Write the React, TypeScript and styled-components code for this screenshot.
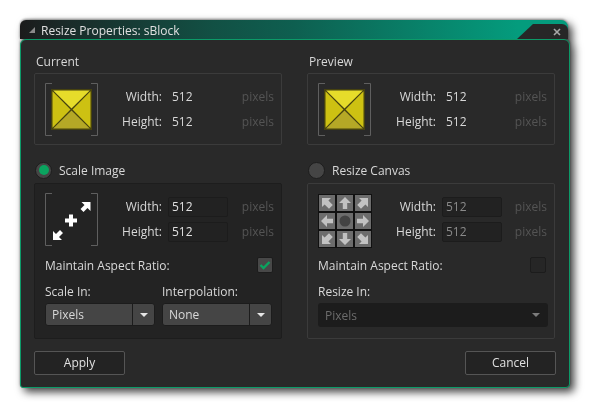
import React from "react";
import styled, { createGlobalStyle } from "styled-components";

const Global = createGlobalStyle`
  html, body { margin: 0; padding: 0; background: #fff; }
  body { font-family: "Open Sans", "Noto Sans", sans-serif; font-size: 12px; color: #d8d8d8; }
`;

const Page = styled.div`
  width: 590px;
  height: 409px;
  padding: 20px 0 0 20px;
  box-sizing: border-box;
  overflow: hidden;
`;

const Window = styled.div`
  position: relative;
  width: 550px;
  filter: drop-shadow(0 -1px 1px rgba(0, 0, 0, 0.4)) drop-shadow(4px 4px 4px rgba(0, 0, 0, 0.75));
`;

const TitleBar = styled.div`
  position: relative;
  width: 548px;
  height: 19px;
  display: flex;
  align-items: center;
  padding: 1px 0 0 9px;
  box-sizing: border-box;
  gap: 6px;
  font-size: 12px;
  color: #e0e0e0;
  border-radius: 6px 7px 0 0;
  background: linear-gradient(90deg, #1b1b1b 0%, #1a2a28 8%, #125044 35%, #0e5f50 50%, #049c7d 91%, #049c7d 100%);
`;

const TitleGrip = styled.span`
  width: 0;
  height: 0;
  border-left: 6px solid transparent;
  border-bottom: 6px solid #8a8a8a;
`;

const Notch = styled.div`
  position: absolute;
  top: 4px;
  right: 0;
  width: 51px;
  height: 15px;
  background: #272727;
  clip-path: polygon(16px 0, 100% 0, 100% 100%, 0 100%);
  border-top-right-radius: 6px;
  display: flex;
  align-items: center;
  justify-content: flex-end;
  padding: 0 7px 0 0;
  box-sizing: border-box;
`;

const Body = styled.div`
  height: 349px;
  width: 550px;
  box-sizing: border-box;
  background: #292929;
  border: 1px solid #0c9a68;
  border-radius: 6px 6px 4px 3px;
  padding: 13px 13px 12px 13px;
  display: flex;
  flex-direction: column;
`;

const Columns = styled.div`
  display: grid;
  grid-template-columns: 248px 248px;
  column-gap: 25px;
`;

const Column = styled.div`
  display: flex;
  flex-direction: column;
`;

const Caption = styled.div`
  height: 20px;
  line-height: 17px;
  padding-left: 2px;
  font-size: 12px;
`;

const InfoFrame = styled.div`
  height: 72px;
  box-sizing: border-box;
  border: 1px solid #3b3b3b;
  border-radius: 2px;
  padding: 9px 7px 0 10px;
  display: flex;
  align-items: flex-start;
`;

const RadioRow = styled.div`
  height: 24px;
  margin-top: 13px;
  margin-bottom: 1px;
  display: flex;
  align-items: center;
  gap: 7px;
  padding-left: 1px;
  font-size: 12px;
`;

const Radio = styled.span<{ $on?: boolean }>`
  width: 17px;
  height: 17px;
  box-sizing: border-box;
  border-radius: 50%;
  background: #454545;
  border: 1px solid #1d1d1d;
  display: flex;
  align-items: center;
  justify-content: center;
  &::after {
    content: "";
    width: 10px;
    height: 10px;
    border-radius: 50%;
    background: ${(p) => (p.$on ? "#0aa45f" : "transparent")};
  }
`;

const OptionPanel = styled.div<{ $dark?: boolean }>`
  height: 156px;
  box-sizing: border-box;
  border: 1px solid ${(p) => (p.$dark ? "#1d1d1d" : "#3b3b3b")};
  background: ${(p) => (p.$dark ? "#232323" : "#292929")};
  border-radius: 2px;
  padding: 9px 7px 0 10px;
  display: flex;
  flex-direction: column;
`;

const TopRow = styled.div`
  display: flex;
  height: 54px;
`;

const IconBox = styled.div`
  width: 54px;
  height: 54px;
  flex: none;
`;

const Fields = styled.div<{ $label: number }>`
  flex: 1;
  height: 54px;
  box-sizing: border-box;
  padding-bottom: 2px;
  display: grid;
  grid-template-columns: ${(p) => p.$label}px 1fr auto;
  grid-auto-rows: 25px;
  align-content: center;
  align-items: center;
  column-gap: 6px;
`;

const FieldLabel = styled.span`
  text-align: right;
  font-size: 12px;
`;

const Value = styled.span`
  font-size: 12px;
  padding-left: 4px;
`;

const Unit = styled.span`
  font-size: 12px;
  color: #545454;
  text-align: right;
`;

const NumberBox = styled.div<{ $off?: boolean }>`
  height: 20px;
  width: 60px;
  box-sizing: border-box;
  background: #222;
  border: 1px solid #1c1c1c;
  border-radius: 2px;
  padding-left: 3px;
  line-height: 17px;
  font-size: 12px;
  color: ${(p) => (p.$off ? "#8a8a8a" : "#e0e0e0")};
`;

const CheckRow = styled.div`
  display: flex;
  align-items: center;
  justify-content: space-between;
  height: 18px;
  margin-top: 9px;
  padding-right: 1px;
  font-size: 12px;
`;

const CheckBox = styled.span<{ $on?: boolean }>`
  width: 16px;
  height: 16px;
  box-sizing: border-box;
  border-radius: 2px;
  border: 1px solid #1c1c1c;
  background: ${(p) => (p.$on ? "#484848" : "#262626")};
  display: flex;
  align-items: center;
  justify-content: center;
`;

const SelectGrid = styled.div`
  display: grid;
  grid-template-columns: 110px 110px;
  column-gap: 7px;
  margin-top: 8px;
`;

const SelectLabel = styled.div`
  height: 21px;
  line-height: 19px;
  font-size: 12px;
`;

const Select = styled.div`
  height: 23px;
  box-sizing: border-box;
  display: flex;
  background: #454545;
  border: 1px solid #1c1c1c;
  border-radius: 3px;
  font-size: 12px;
`;

const SelectText = styled.span`
  flex: 1;
  padding-left: 6px;
  line-height: 22px;
`;

const SelectArrow = styled.span`
  width: 21px;
  border-left: 1px solid #1c1c1c;
  display: flex;
  align-items: center;
  justify-content: center;
`;

const Caret = styled.span<{ $c: string }>`
  width: 0;
  height: 0;
  border-left: 4px solid transparent;
  border-right: 4px solid transparent;
  border-top: 4px solid ${(p) => p.$c};
`;

const WideSelect = styled.div`
  height: 24px;
  width: 230px;
  box-sizing: border-box;
  display: flex;
  align-items: center;
  justify-content: space-between;
  background: #1c1c1c;
  border-radius: 3px;
  padding: 0 8px 0 7px;
  font-size: 12px;
  color: #6c6c6c;
`;

const Footer = styled.div`
  display: flex;
  justify-content: space-between;
  margin-top: 12px;
`;

const Button = styled.div`
  width: 91px;
  height: 24px;
  box-sizing: border-box;
  border: 1px solid #555;
  border-radius: 2px;
  background: #232323;
  text-align: center;
  line-height: 22px;
  font-size: 12px;
  color: #e0e0e0;
`;

const Bracket = ({ children }: { children: React.ReactNode }) => (
  <svg width="54" height="54" viewBox="0 0 54 54">
    <path d="M7 .5H.5v52H7M46 .5h6.5v52H46" fill="none" stroke="#5f5f5f" strokeWidth="1" />
    {children}
  </svg>
);

const BlockArt = () => (
  <IconBox>
    <Bracket>
      <rect x="6" y="6" width="41" height="41" fill="#46420f" />
      <polygon points="8.2,7.5 44.8,7.5 26.5,25.5" fill="#e6dc2a" />
      <polygon points="7.5,8.2 7.5,44.8 25.5,26.5" fill="#cdc112" />
      <polygon points="45.5,8.2 45.5,44.8 27.5,26.5" fill="#cdc112" />
      <polygon points="8.2,45.5 44.8,45.5 26.5,27.5" fill="#b5a826" />
    </Bracket>
  </IconBox>
);

const ScaleArt = () => (
  <IconBox>
    <Bracket>
      <path d="M24 21.5h4v4h4v4h-4v4h-4v-4h-4v-4h4z" fill="#fff" />
      <path d="M36.5 9h9v9l-3-3-4 4-3-3 4-4z" fill="#fff" />
      <path d="M17 47H8v-9l3 3 4-4 3 3-4 4z" fill="#fff" />
    </Bracket>
  </IconBox>
);

type Anchor = { kind: "straight" | "corner" | "dot"; rot: number };

const AnchorCell = ({ x, y, a }: { x: number; y: number; a: Anchor }) => (
  <g transform={`translate(${x} ${y})`}>
    <rect x="0.5" y="0.5" width="17" height="17" fill="#6c6c6c" stroke="#111" />
    {a.kind === "dot" && <circle cx="9" cy="9" r="5.5" fill="#434343" />}
    {a.kind === "straight" && (
      <path
        transform={`rotate(${a.rot} 9 9)`}
        d="M9 3 15 9H11.2V15H6.8V9H3z"
        fill="#c2c2c2"
      />
    )}
    {a.kind === "corner" && (
      <path
        transform={`rotate(${a.rot} 9 9)`}
        d="M4 4h9l-2.6 2.6 4.4 4.4-3.8 3.8-4.4-4.4L4 13z"
        fill="#c2c2c2"
      />
    )}
  </g>
);

const ANCHORS: Anchor[] = [
  { kind: "corner", rot: 0 },
  { kind: "straight", rot: 0 },
  { kind: "corner", rot: 90 },
  { kind: "straight", rot: -90 },
  { kind: "dot", rot: 0 },
  { kind: "straight", rot: 90 },
  { kind: "corner", rot: -90 },
  { kind: "straight", rot: 180 },
  { kind: "corner", rot: 180 },
];

const AnchorArt = () => (
  <IconBox>
    <svg width="54" height="55" viewBox="0 -1 54 55">
      {ANCHORS.map((a, i) => (
        <AnchorCell key={i} x={(i % 3) * 18} y={Math.floor(i / 3) * 18} a={a} />
      ))}
    </svg>
  </IconBox>
);

const Check = () => (
  <svg width="12" height="10" viewBox="0 0 12 10">
    <path d="M1.5 5 4.5 8 10.5 2" fill="none" stroke="#0aa45f" strokeWidth="2.4" />
  </svg>
);

const Close = () => (
  <svg width="8" height="8" viewBox="0 0 8 8">
    <path d="M1 1 7 7M7 1 1 7" stroke="#a8a8a8" strokeWidth="1.6" />
  </svg>
);

const ReadFields = ({ label }: { label: number }) => (
  <Fields $label={label}>
    <FieldLabel>Width:</FieldLabel>
    <Value>512</Value>
    <Unit>pixels</Unit>
    <FieldLabel>Height:</FieldLabel>
    <Value>512</Value>
    <Unit>pixels</Unit>
  </Fields>
);

const EditFields = ({ label, off }: { label: number; off?: boolean }) => (
  <Fields $label={label}>
    <FieldLabel>Width:</FieldLabel>
    <NumberBox $off={off}>512</NumberBox>
    <Unit>pixels</Unit>
    <FieldLabel>Height:</FieldLabel>
    <NumberBox $off={off}>512</NumberBox>
    <Unit>pixels</Unit>
  </Fields>
);

export default function App() {
  return (
    <Page>
      <Global />
      <Window>
        <TitleBar>
          <TitleGrip />
          Resize Properties: sBlock
          <Notch>
            <Close />
          </Notch>
        </TitleBar>
        <Body>
          <Columns>
            <Column>
              <Caption>Current</Caption>
              <InfoFrame>
                <BlockArt />
                <ReadFields label={63} />
              </InfoFrame>
              <RadioRow>
                <Radio $on />
                Scale Image
              </RadioRow>
              <OptionPanel $dark>
                <TopRow>
                  <ScaleArt />
                  <EditFields label={63} />
                </TopRow>
                <CheckRow>
                  Maintain Aspect Ratio:
                  <CheckBox $on>
                    <Check />
                  </CheckBox>
                </CheckRow>
                <SelectGrid>
                  <SelectLabel>Scale In:</SelectLabel>
                  <SelectLabel>Interpolation:</SelectLabel>
                  <Select>
                    <SelectText>Pixels</SelectText>
                    <SelectArrow>
                      <Caret $c="#e6e6e6" />
                    </SelectArrow>
                  </Select>
                  <Select>
                    <SelectText>None</SelectText>
                    <SelectArrow>
                      <Caret $c="#e6e6e6" />
                    </SelectArrow>
                  </Select>
                </SelectGrid>
              </OptionPanel>
            </Column>
            <Column>
              <Caption>Preview</Caption>
              <InfoFrame>
                <BlockArt />
                <ReadFields label={64} />
              </InfoFrame>
              <RadioRow>
                <Radio />
                Resize Canvas
              </RadioRow>
              <OptionPanel>
                <TopRow>
                  <AnchorArt />
                  <EditFields label={64} off />
                </TopRow>
                <CheckRow>
                  Maintain Aspect Ratio:
                  <CheckBox />
                </CheckRow>
                <SelectGrid>
                  <SelectLabel>Resize In:</SelectLabel>
                  <span />
                </SelectGrid>
                <WideSelect>
                  Pixels
                  <Caret $c="#7c7c7c" />
                </WideSelect>
              </OptionPanel>
            </Column>
          </Columns>
          <Footer>
            <Button>Apply</Button>
            <Button>Cancel</Button>
          </Footer>
        </Body>
      </Window>
    </Page>
  );
}
